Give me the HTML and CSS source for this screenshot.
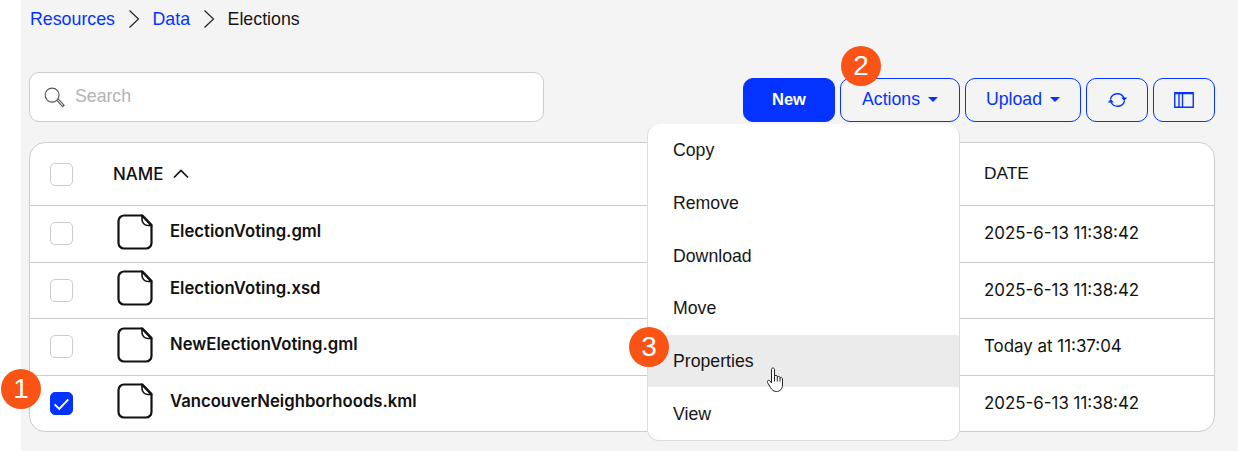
FILE: index.html
```html
<!DOCTYPE html>
<html lang="en">
<head>
<meta charset="utf-8">
<title>Resources - Elections</title>
<link rel="stylesheet" href="styles.css">
</head>
<body>
<main class="page">
  <nav class="crumbs">
    <a class="crumb-link">Resources</a>
    <svg class="crumb-sep" viewBox="0 0 12 18"><path d="M1.500.5l9 8.500-9 8.500"/></svg>
    <a class="crumb-link">Data</a>
    <svg class="crumb-sep" viewBox="0 0 12 18"><path d="M1.500.5l9 8.500-9 8.500"/></svg>
    <span class="crumb-current">Elections</span>
  </nav>

  <div class="toolbar">
    <div class="search">
      <svg class="search-icon" viewBox="0 0 22 22"><circle cx="8.500" cy="8.500" r="7.300"/><path d="M13.500 14l6 6.500 1.500-1.500-6-6.300"/></svg>
      <span class="search-text">Search</span>
    </div>
    <div class="actions">
      <button class="btn btn-primary">New</button>
      <button class="btn btn-actions">Actions<span class="caret"></span></button>
      <button class="btn btn-upload">Upload<span class="caret"></span></button>
      <button class="btn btn-icon">
        <svg class="icon-refresh" viewBox="0 0 21 18"><path d="M3.500 8A7.200 7.200 0 0 1 17 7M17.500 10A7.200 7.200 0 0 1 4 11"/><path class="fill" d="M14.200 6.500h6l-3 3.500zM.8 11.500h6l-3-3.500z"/></svg>
      </button>
      <button class="btn btn-icon">
        <svg class="icon-cols" viewBox="0 0 20 16"><path d="M.75.75h18.500v14.500H.75zM.75 1.500h18.500M5 1v14M8.500 1v14"/></svg>
      </button>
    </div>
  </div>

  <section class="table">
    <div class="row row-head">
      <span class="check"></span>
      <span class="head-name">NAME<svg class="sort" viewBox="0 0 16 10"><path d="M1 8.500l7-7 7 7"/></svg></span>
      <span class="head-date">DATE</span>
    </div>
    <div class="row">
      <span class="check"></span>
      <svg class="file" viewBox="0 0 36 36"><path d="M7 1.500h18.500L34.500 11v18a5.500 5.500 0 0 1-5.500 5.500H7A5.500 5.500 0 0 1 1.500 29V7A5.500 5.500 0 0 1 7 1.500z"/><path class="fold" d="M25 2v3.500a6 6 0 0 0 6 6h3z"/></svg>
      <span class="file-name">ElectionVoting.gml</span>
      <span class="date">2025-6-13 11:38:42</span>
    </div>
    <div class="row">
      <span class="check"></span>
      <svg class="file" viewBox="0 0 36 36"><path d="M7 1.500h18.500L34.500 11v18a5.500 5.500 0 0 1-5.500 5.500H7A5.500 5.500 0 0 1 1.500 29V7A5.500 5.500 0 0 1 7 1.500z"/><path class="fold" d="M25 2v3.500a6 6 0 0 0 6 6h3z"/></svg>
      <span class="file-name">ElectionVoting.xsd</span>
      <span class="date">2025-6-13 11:38:42</span>
    </div>
    <div class="row">
      <span class="check"></span>
      <svg class="file" viewBox="0 0 36 36"><path d="M7 1.500h18.500L34.500 11v18a5.500 5.500 0 0 1-5.500 5.500H7A5.500 5.500 0 0 1 1.500 29V7A5.500 5.500 0 0 1 7 1.500z"/><path class="fold" d="M25 2v3.500a6 6 0 0 0 6 6h3z"/></svg>
      <span class="file-name">NewElectionVoting.gml</span>
      <span class="date">Today at 11:37:04</span>
    </div>
    <div class="row">
      <span class="check check-on"><svg viewBox="0 0 23 23"><path d="M4 12.500l5 5L19 7"/></svg></span>
      <svg class="file" viewBox="0 0 36 36"><path d="M7 1.500h18.500L34.500 11v18a5.500 5.500 0 0 1-5.500 5.500H7A5.500 5.500 0 0 1 1.500 29V7A5.500 5.500 0 0 1 7 1.500z"/><path class="fold" d="M25 2v3.500a6 6 0 0 0 6 6h3z"/></svg>
      <span class="file-name">VancouverNeighborhoods.kml</span>
      <span class="date">2025-6-13 11:38:42</span>
    </div>
  </section>

  <ul class="menu">
    <li class="menu-item">Copy</li>
    <li class="menu-item">Remove</li>
    <li class="menu-item">Download</li>
    <li class="menu-item">Move</li>
    <li class="menu-item menu-item-hover">Properties</li>
    <li class="menu-item">View</li>
  </ul>

  <svg class="cursor" viewBox="0 0 18 26"><path d="M4.500 2.500c0-2 3-2 3 0v7c0-1.500 2.800-1.500 2.800 0v1c0-1.500 2.700-1.500 2.700 0v1c0-1.300 2.500-1.300 2.500.3V18c0 4-2.500 6.500-6 6.500-3 0-4.500-1.500-6-4l-3-5c-1-2 1.500-3 2.500-1.500l1.500 2z"/><path d="M7.500 9.500v5M10.300 10.500v4M13 11.500v3"/></svg>

  <span class="badge badge-1">1</span>
  <span class="badge badge-2">2</span>
  <span class="badge badge-3">3</span>
</main>
</body>
</html>
```
FILE: styles.css
```css
* { box-sizing: border-box; }
html, body { margin: 0; height: 100%; background: #fff; overflow: hidden; }
body { padding-left: 21px; font-family: "Liberation Sans", Arial, sans-serif; color: #111; }
.page {
  position: relative;
  height: 451px;
  background: #f4f4f4;
  padding: 0 23px 0 8px;
  font-size: 17.700px;
}
.crumbs { display: flex; align-items: center; height: 38px; padding-left: 1px; font-size: 17.800px; }
.crumb-link { color: #0433ff; }
.crumb-current { color: #161616; }
.crumb-sep { width: 12px; height: 18px; margin: 0 12.500px 0 13px; fill: none; stroke: #222; stroke-width: 1.200; }
.toolbar { display: flex; justify-content: space-between; align-items: flex-end; margin-top: 34px; height: 50px; }
.search {
  display: flex; align-items: center; width: 515px; height: 50px;
  background: #fff; border: 1px solid #ccc; border-radius: 10px; padding-left: 14px;
}
.search-icon { width: 21px; height: 21px; fill: none; stroke: #555; stroke-width: 1.200; }
.search-text { margin: -2px 0 0 10px; color: #b3b3b3; }
.actions { display: flex; gap: 5px; }
.btn {
  display: flex; align-items: center; justify-content: center; height: 44px;
  border: 1px solid #0433ff; border-radius: 10px; background: transparent;
  color: #0433ff; font: inherit; padding: 0 0 2px;
}
.btn-primary { width: 92px; background: #0433ff; color: #fff; font-weight: 700; font-size: 16.500px; }
.btn-actions { width: 120px; }
.btn-upload { width: 116px; }
.btn-icon { width: 62px; padding: 0; }
.caret { margin-left: 8px; border: 5px solid transparent; border-top: 5px solid #0433ff; border-bottom: 0; }
.icon-refresh { width: 21px; height: 18px; fill: none; stroke: #0433ff; stroke-width: 1.300; }
.icon-refresh .fill { fill: #0433ff; stroke: none; }
.icon-cols { width: 20px; height: 16px; fill: none; stroke: #0433ff; stroke-width: 1.400; }
.table {
  margin-top: 20px; background: #fff; border: 1px solid #ccc; border-radius: 16px; height: 290px;
  display: grid; grid-template-rows: 62px repeat(4, 1fr);
}
.row {
  display: grid; grid-template-columns: 67px 53px 814px 1fr; align-items: center;
  padding-left: 20px; border-top: 1px solid #ccc;
}
.row-head { border-top: 0; grid-template-columns: 63px 871px 1fr; }
.check { width: 23px; height: 23px; border: 1px solid #ccc; border-radius: 5px; background: #fff; display: block; }
.check-on { background: #0433ff; border-color: #0433ff; }
.check-on svg { display: block; width: 21px; height: 21px; fill: none; stroke: #fff; stroke-width: 2; }
.head-name { display: flex; align-items: center; font-family: Inter, "Liberation Sans", sans-serif; font-weight: 500; font-size: 16.900px; margin-bottom: 1px; }
.head-date { font-size: 17.300px; margin-bottom: 1px; }
.sort { width: 16px; height: 10px; margin-left: 10px; fill: none; stroke: #111; stroke-width: 1.700; }
.file { width: 36px; height: 36px; margin-bottom: 4px; fill: #fff; stroke: #111; stroke-width: 2.200; }
.fold { fill: #fff; stroke-width: 1.600; }
.file-name { font-family: Inter, "Liberation Sans", sans-serif; font-weight: 600; font-size: 16.700px; margin-bottom: 5px; }
.date { font-family: Inter, "Liberation Sans", sans-serif; font-size: 16.900px; margin-bottom: 1px; }
.menu {
  position: absolute; left: 626px; top: 124px; width: 313px; height: 317px; margin: 0; padding: 0; list-style: none;
  background: #fff; border-radius: 12px; border: 1px solid #ddd; border-top: 0; overflow: hidden;
  display: grid; grid-template-rows: repeat(6, 1fr);
}
.menu-item { display: flex; align-items: center; padding: 1px 0 0 25px; color: #161616; }
.menu-item-hover { background: #ebebeb; }
.cursor { position: absolute; left: 746px; top: 367px; width: 18px; height: 26px; fill: #fff; stroke: #222; stroke-width: 1; }
.badge {
  position: absolute; width: 40px; height: 40px; border-radius: 50%; background: #f95415; color: #fff;
  display: flex; align-items: center; justify-content: center; font-size: 28px;
}
.badge-1 { left: -20px; top: 369px; }
.badge-2 { left: 820px; top: 46px; }
.badge-3 { left: 608px; top: 327px; }
```
